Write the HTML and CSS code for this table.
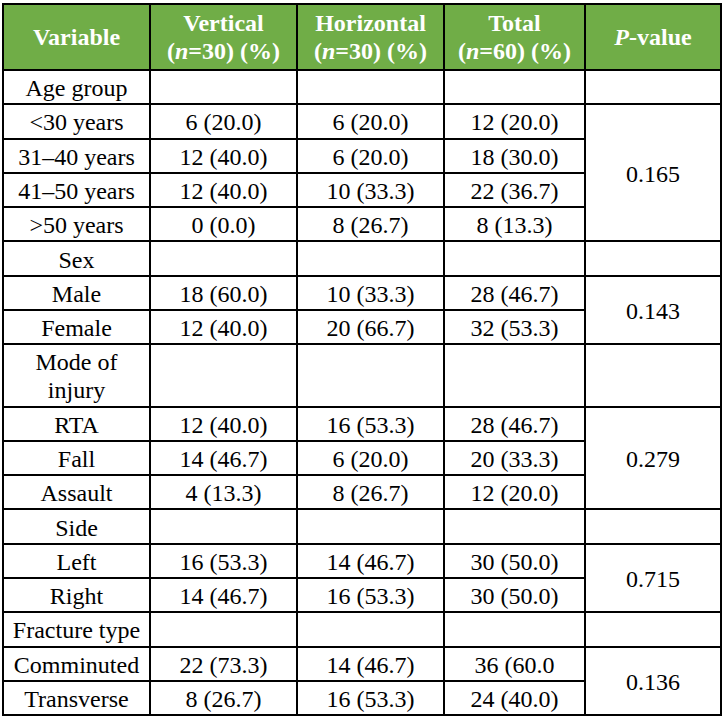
FILE: index.html
```html
<!DOCTYPE html>
<html>
<head>
<meta charset="utf-8">
<link rel="stylesheet" href="styles.css">
</head>
<body class="page">
<table class="data">
<colgroup>
<col class="c1"><col class="c2"><col class="c3"><col class="c4"><col class="c5">
</colgroup>
<thead>
<tr>
<th>Variable</th>
<th>Vertical<br>(<i>n</i>=30) (%)</th>
<th>Horizontal<br>(<i>n</i>=30) (%)</th>
<th>Total<br>(<i>n</i>=60) (%)</th>
<th><i>P</i>-value</th>
</tr>
</thead>
<tbody>
<tr><td>Age group</td><td></td><td></td><td></td><td></td></tr>
<tr><td>&lt;30 years</td><td>6 (20.0)</td><td>6 (20.0)</td><td>12 (20.0)</td><td rowspan="4">0.165</td></tr>
<tr><td>31–40 years</td><td>12 (40.0)</td><td>6 (20.0)</td><td>18 (30.0)</td></tr>
<tr><td>41–50 years</td><td>12 (40.0)</td><td>10 (33.3)</td><td>22 (36.7)</td></tr>
<tr><td>&gt;50 years</td><td>0 (0.0)</td><td>8 (26.7)</td><td>8 (13.3)</td></tr>
<tr><td>Sex</td><td></td><td></td><td></td><td></td></tr>
<tr><td>Male</td><td>18 (60.0)</td><td>10 (33.3)</td><td>28 (46.7)</td><td rowspan="2">0.143</td></tr>
<tr><td>Female</td><td>12 (40.0)</td><td>20 (66.7)</td><td>32 (53.3)</td></tr>
<tr><td>Mode of<br>injury</td><td></td><td></td><td></td><td></td></tr>
<tr><td>RTA</td><td>12 (40.0)</td><td>16 (53.3)</td><td>28 (46.7)</td><td rowspan="3">0.279</td></tr>
<tr><td>Fall</td><td>14 (46.7)</td><td>6 (20.0)</td><td>20 (33.3)</td></tr>
<tr><td>Assault</td><td>4 (13.3)</td><td>8 (26.7)</td><td>12 (20.0)</td></tr>
<tr><td>Side</td><td></td><td></td><td></td><td></td></tr>
<tr><td>Left</td><td>16 (53.3)</td><td>14 (46.7)</td><td>30 (50.0)</td><td rowspan="2">0.715</td></tr>
<tr><td>Right</td><td>14 (46.7)</td><td>16 (53.3)</td><td>30 (50.0)</td></tr>
<tr><td>Fracture type</td><td></td><td></td><td></td><td></td></tr>
<tr><td>Comminuted</td><td>22 (73.3)</td><td>14 (46.7)</td><td>36 (60.0</td><td rowspan="2">0.136</td></tr>
<tr><td>Transverse</td><td>8 (26.7)</td><td>16 (53.3)</td><td>24 (40.0)</td></tr>
</tbody>
</table>
</body>
</html>
```
FILE: styles.css
```css
html {
  margin: 0;
  background: #ffffff;
}
.page {
  margin: 0;
  padding: 3px 0 0 2px;
  font-family: "Liberation Serif", serif;
  font-size: 24px;
  color: #000000;
}
.data {
  border-collapse: collapse;
  table-layout: fixed;
  width: 718px;
}
.c1 { width: 147px; }
.c2 { width: 147px; }
.c3 { width: 147px; }
.c4 { width: 141px; }
.c5 { width: 136px; }
.data th,
.data td {
  border: 2px solid #000000;
  text-align: center;
  vertical-align: middle;
  padding: 3.15px 2px 1.15px;
  line-height: 28px;
  white-space: nowrap;
  overflow: hidden;
}
.data th {
  background: #70ad47;
  color: #ffffff;
  font-weight: bold;
  padding: 4px 2px;
}
.data i {
  font-style: italic;
}
```
